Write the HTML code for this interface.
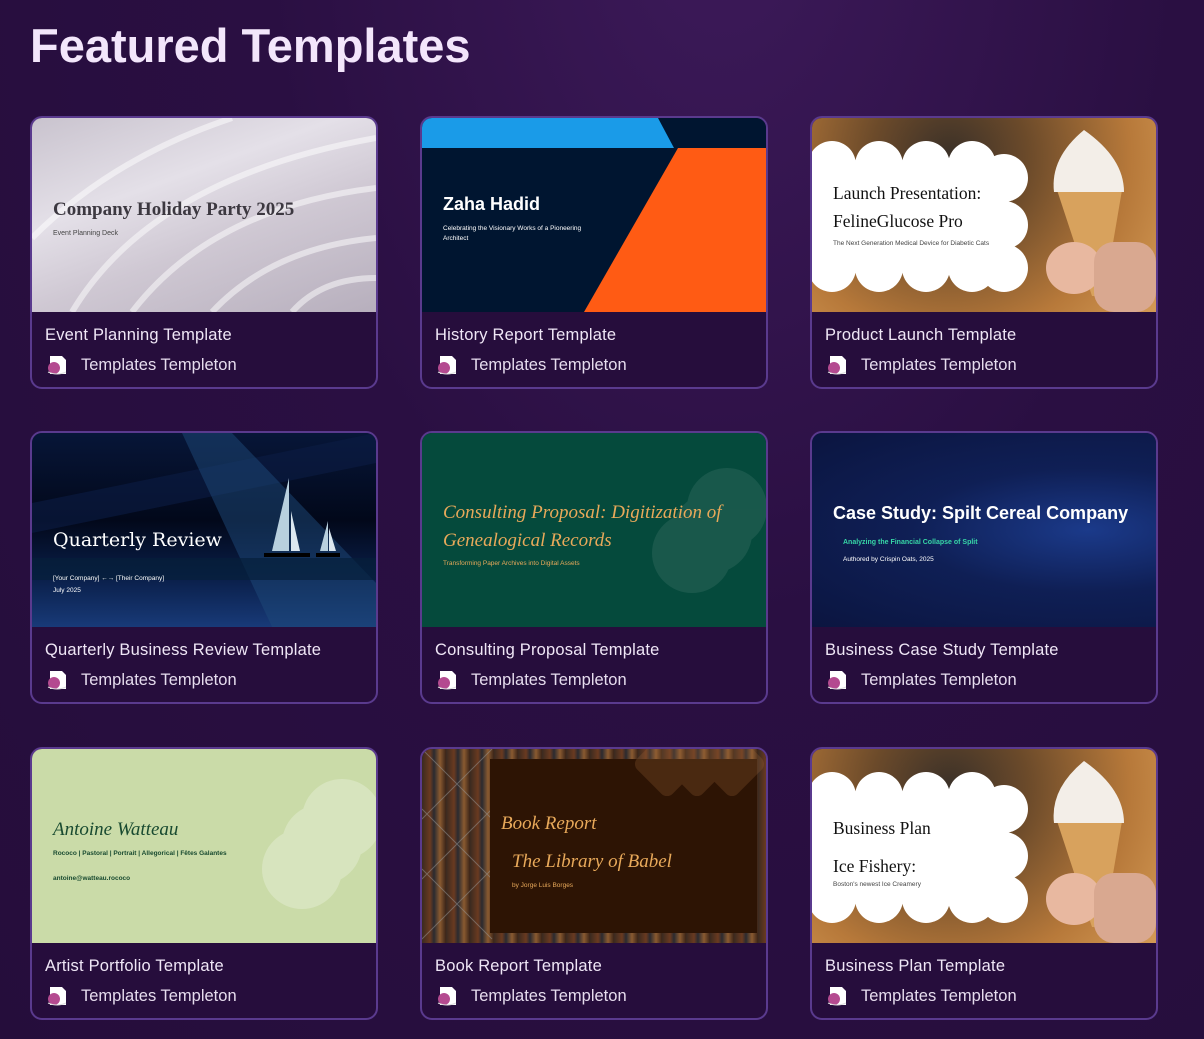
<!DOCTYPE html>
<html><head><meta charset="utf-8">
<style>
*{margin:0;padding:0;box-sizing:border-box}
body{width:1204px;height:1039px;overflow:hidden;background:radial-gradient(ellipse at 60% -10%,#3d1a5a 0%,#2a0f42 45%,#250d3b 100%);font-family:"Liberation Sans",sans-serif;position:relative}
h1{position:absolute;left:30px;top:18px;font-size:47px;font-weight:bold;color:#f3e6fb}
.card{position:absolute;width:348px;height:273px;border:2px solid #5a3a8e;border-radius:12px;background:#260d3c;overflow:hidden}
.th{position:absolute;left:0;top:0;width:344px;height:194px;overflow:hidden}
.t{position:absolute;left:13px;top:208px;font-size:16.5px;color:#efe6f6;letter-spacing:.2px}
.a{position:absolute;left:13px;top:235px;height:24px;display:flex;align-items:center;font-size:16.5px;color:#e6dcee}
.a svg{margin-right:12px}
.abs{position:absolute}
.serif{font-family:"Liberation Serif",serif}
</style></head><body>
<h1>Featured Templates</h1>

<div class="card" style="left:30px;top:116px">
 <div class="th" style="background:linear-gradient(160deg,#c9c3ce 0%,#e4e0e8 35%,#cfc8d3 60%,#b7afbd 100%)">
  <svg class="abs" width="344" height="194" style="left:0;top:0;opacity:.5"><g fill="none" stroke="#fff" stroke-width="6"><path d="M40 194 Q120 60 344 20"/><path d="M100 194 Q180 90 344 70"/><path d="M0 120 Q80 40 200 0"/><path d="M180 194 Q240 130 344 120"/><path d="M260 194 Q290 160 344 160"/></g></svg>
  <div class="abs serif" style="left:21px;top:81px;font-size:19px;color:#3c3840;font-weight:bold">Company Holiday Party 2025</div>
  <div class="abs" style="left:21px;top:112px;font-size:7px;color:#444">Event Planning Deck</div>
 </div>
 <div class="t">Event Planning Template</div>
 <div class="a"><svg width="24" height="24"><path d="M5 3h12l4 4v14H5z" fill="#fff"/><circle cx="9" cy="15" r="6" fill="#b44a90"/><path d="M3 19q9 4 18 0" stroke="#ddd" fill="none"/></svg>Templates Templeton</div>
</div>

<div class="card" style="left:420px;top:116px">
 <div class="th" style="background:#001530">
  <svg class="abs" width="344" height="194" style="left:0;top:0"><polygon points="0,0 236,0 252,30 0,30" fill="#1a9be8"/><polygon points="256,30 344,30 344,194 162,194" fill="#ff5b14"/></svg>
  <div class="abs" style="left:21px;top:76px;font-size:18px;color:#fff;font-weight:bold">Zaha Hadid</div>
  <div class="abs" style="left:21px;top:106px;font-size:6.5px;color:#fff;width:160px;line-height:10px">Celebrating the Visionary Works of a Pioneering Architect</div>
 </div>
 <div class="t">History Report Template</div>
 <div class="a"><svg width="24" height="24"><path d="M5 3h12l4 4v14H5z" fill="#fff"/><circle cx="9" cy="15" r="6" fill="#b44a90"/><path d="M3 19q9 4 18 0" stroke="#ddd" fill="none"/></svg>Templates Templeton</div>
</div>

<div class="card" style="left:810px;top:116px">
 <div class="th" style="background:radial-gradient(circle at 40% 20%,#3a3028 0%,#6b4a2a 30%,#b7793a 70%,#d49a55 100%)">
  <svg class="abs" width="344" height="194" style="left:0;top:0">
   <g fill="#fff"><rect x="0" y="47" width="192" height="103"/>
   <circle cx="20" cy="47" r="24"/><circle cx="67" cy="47" r="24"/><circle cx="114" cy="47" r="24"/><circle cx="160" cy="47" r="24"/><circle cx="192" cy="60" r="24"/><circle cx="192" cy="107" r="24"/><circle cx="192" cy="150" r="24"/>
   <circle cx="20" cy="150" r="24"/><circle cx="67" cy="150" r="24"/><circle cx="114" cy="150" r="24"/><circle cx="160" cy="150" r="24"/></g>
   <path d="M245 72 L310 72 L292 178 L280 178Z" fill="#d8a25d"/>
   <path d="M242 74 Q238 40 272 12 Q312 40 312 74Z" fill="#f3eee8"/>
   <ellipse cx="262" cy="150" rx="28" ry="26" fill="#e8b8a0"/>
   <rect x="282" y="124" width="62" height="70" fill="#d9a890" rx="20"/>
  </svg>
  <div class="abs serif" style="left:21px;top:61px;font-size:17.5px;color:#111;line-height:28px">Launch Presentation:<br>FelineGlucose Pro</div>
  <div class="abs" style="left:21px;top:121px;font-size:6.5px;color:#444;width:170px;line-height:10px">The Next Generation Medical Device for Diabetic Cats</div>
 </div>
 <div class="t">Product Launch Template</div>
 <div class="a"><svg width="24" height="24"><path d="M5 3h12l4 4v14H5z" fill="#fff"/><circle cx="9" cy="15" r="6" fill="#b44a90"/><path d="M3 19q9 4 18 0" stroke="#ddd" fill="none"/></svg>Templates Templeton</div>
</div>

<div class="card" style="left:30px;top:431px">
 <div class="th" style="background:linear-gradient(180deg,#071638 0%,#02081a 45%,#0a1f4a 75%,#183a78 100%)">
  <svg class="abs" width="344" height="194" style="left:0;top:0">
   <polygon points="0,70 344,0 344,30 0,100" fill="#0b1d44" opacity=".6"/>
   <polygon points="150,0 200,0 344,150 344,194 240,194" fill="#1d4a7a" opacity=".5"/>
   <rect x="0" y="125" width="344" height="22" fill="#06203a" opacity=".7"/>
   <polygon points="240,118 257,45 257,118" fill="#b8d0de"/><polygon points="259,118 259,78 268,118" fill="#dce8f0"/>
   <rect x="232" y="120" width="46" height="4" fill="#000"/>
   <polygon points="288,118 296,88 296,118" fill="#b8d0de"/><polygon points="297,118 297,95 304,118" fill="#dce8f0"/>
   <rect x="284" y="120" width="24" height="4" fill="#000"/>
  </svg>
  <div class="abs" style="left:21px;top:96px;font-size:19px;color:#fff;font-family:'DejaVu Serif',serif;font-weight:300">Quarterly Review</div>
  <div class="abs" style="left:21px;top:140px;font-size:6.5px;color:#fff;line-height:12px">[Your Company] ←→ [Their Company]<br>July 2025</div>
 </div>
 <div class="t">Quarterly Business Review Template</div>
 <div class="a"><svg width="24" height="24"><path d="M5 3h12l4 4v14H5z" fill="#fff"/><circle cx="9" cy="15" r="6" fill="#b44a90"/><path d="M3 19q9 4 18 0" stroke="#ddd" fill="none"/></svg>Templates Templeton</div>
</div>

<div class="card" style="left:420px;top:431px">
 <div class="th" style="background:#054a3c">
  <svg class="abs" width="344" height="194" style="left:0;top:0"><g fill="#fff" opacity=".08"><circle cx="305" cy="75" r="40"/><circle cx="290" cy="100" r="40"/><circle cx="270" cy="120" r="40"/></g></svg>
  <div class="abs serif" style="left:21px;top:66px;font-size:19px;color:#e8a95a;font-style:italic;line-height:28px">Consulting Proposal: Digitization of<br>Genealogical Records</div>
  <div class="abs" style="left:21px;top:127px;font-size:6.5px;color:#e8a95a">Transforming Paper Archives into Digital Assets</div>
 </div>
 <div class="t">Consulting Proposal Template</div>
 <div class="a"><svg width="24" height="24"><path d="M5 3h12l4 4v14H5z" fill="#fff"/><circle cx="9" cy="15" r="6" fill="#b44a90"/><path d="M3 19q9 4 18 0" stroke="#ddd" fill="none"/></svg>Templates Templeton</div>
</div>

<div class="card" style="left:810px;top:431px">
 <div class="th" style="background:radial-gradient(ellipse at 80% 50%,#1b3a8a 0%,#0f1f55 45%,#0b1540 100%)">
  <div class="abs" style="left:21px;top:70px;font-size:18px;color:#fff;font-weight:bold">Case Study: Spilt Cereal Company</div>
  <div class="abs" style="left:31px;top:106px;font-size:7px;color:#37d6a6;font-weight:bold">Analyzing the Financial Collapse of Split</div>
  <div class="abs" style="left:31px;top:123px;font-size:6.5px;color:#fff">Authored by Crispin Oats, 2025</div>
 </div>
 <div class="t">Business Case Study Template</div>
 <div class="a"><svg width="24" height="24"><path d="M5 3h12l4 4v14H5z" fill="#fff"/><circle cx="9" cy="15" r="6" fill="#b44a90"/><path d="M3 19q9 4 18 0" stroke="#ddd" fill="none"/></svg>Templates Templeton</div>
</div>

<div class="card" style="left:30px;top:747px">
 <div class="th" style="background:#cadba8">
  <svg class="abs" width="344" height="194" style="left:0;top:0"><g fill="#fff" opacity=".25"><circle cx="310" cy="70" r="40"/><circle cx="290" cy="95" r="40"/><circle cx="270" cy="120" r="40"/></g></svg>
  <div class="abs serif" style="left:21px;top:70px;font-size:19px;color:#184a30;font-style:italic">Antoine Watteau</div>
  <div class="abs" style="left:21px;top:101px;font-size:6.5px;color:#184a30;font-weight:bold">Rococo | Pastoral | Portrait | Allegorical | Fêtes Galantes</div>
  <div class="abs" style="left:21px;top:126px;font-size:6.5px;color:#184a30;font-weight:bold">antoine@watteau.rococo</div>
 </div>
 <div class="t">Artist Portfolio Template</div>
 <div class="a"><svg width="24" height="24"><path d="M5 3h12l4 4v14H5z" fill="#fff"/><circle cx="9" cy="15" r="6" fill="#b44a90"/><path d="M3 19q9 4 18 0" stroke="#ddd" fill="none"/></svg>Templates Templeton</div>
</div>

<div class="card" style="left:420px;top:747px">
 <div class="th" style="background:repeating-linear-gradient(90deg,#3a2a20 0,#6a3a20 8px,#2a2a30 12px,#8a5a30 18px,#3a2418 24px)">
  <svg class="abs" width="344" height="194" style="left:0;top:0"><g stroke="#999" stroke-width="1" opacity=".5" fill="none"><path d="M0 0 L70 70 M0 60 L70 130 M0 120 L70 190 M70 0 L0 70 M70 60 L0 130 M70 120 L0 190"/></g></svg>
  <div class="abs" style="left:68px;top:10px;width:267px;height:174px;background:#2d1404"></div>
  <svg class="abs" width="344" height="194" style="left:0;top:0"><g fill="#a0683a" opacity=".25"><rect x="220" y="-10" width="50" height="50" transform="rotate(45 245 15)" rx="8"/><rect x="250" y="-10" width="50" height="50" transform="rotate(45 275 15)" rx="8"/><rect x="285" y="-10" width="50" height="50" transform="rotate(45 310 15)" rx="8"/></g></svg>
  <div class="abs serif" style="left:79px;top:64px;font-size:19px;color:#e8a95a;font-style:italic">Book Report</div>
  <div class="abs serif" style="left:90px;top:102px;font-size:19px;color:#e8a95a;font-style:italic">The Library of Babel</div>
  <div class="abs" style="left:90px;top:133px;font-size:6.5px;color:#e8a95a">by Jorge Luis Borges</div>
 </div>
 <div class="t">Book Report Template</div>
 <div class="a"><svg width="24" height="24"><path d="M5 3h12l4 4v14H5z" fill="#fff"/><circle cx="9" cy="15" r="6" fill="#b44a90"/><path d="M3 19q9 4 18 0" stroke="#ddd" fill="none"/></svg>Templates Templeton</div>
</div>

<div class="card" style="left:810px;top:747px">
 <div class="th" style="background:radial-gradient(circle at 40% 20%,#3a3028 0%,#6b4a2a 30%,#b7793a 70%,#d49a55 100%)">
  <svg class="abs" width="344" height="194" style="left:0;top:0">
   <g fill="#fff"><rect x="0" y="47" width="192" height="103"/>
   <circle cx="20" cy="47" r="24"/><circle cx="67" cy="47" r="24"/><circle cx="114" cy="47" r="24"/><circle cx="160" cy="47" r="24"/><circle cx="192" cy="60" r="24"/><circle cx="192" cy="107" r="24"/><circle cx="192" cy="150" r="24"/>
   <circle cx="20" cy="150" r="24"/><circle cx="67" cy="150" r="24"/><circle cx="114" cy="150" r="24"/><circle cx="160" cy="150" r="24"/></g>
   <path d="M245 72 L310 72 L292 178 L280 178Z" fill="#d8a25d"/>
   <path d="M242 74 Q238 40 272 12 Q312 40 312 74Z" fill="#f3eee8"/>
   <ellipse cx="262" cy="150" rx="28" ry="26" fill="#e8b8a0"/>
   <rect x="282" y="124" width="62" height="70" fill="#d9a890" rx="20"/>
  </svg>
  <div class="abs serif" style="left:21px;top:60px;font-size:17.5px;color:#111;line-height:38px">Business Plan<br>Ice Fishery:</div>
  <div class="abs" style="left:21px;top:132px;font-size:6.5px;color:#444">Boston's newest Ice Creamery</div>
 </div>
 <div class="t">Business Plan Template</div>
 <div class="a"><svg width="24" height="24"><path d="M5 3h12l4 4v14H5z" fill="#fff"/><circle cx="9" cy="15" r="6" fill="#b44a90"/><path d="M3 19q9 4 18 0" stroke="#ddd" fill="none"/></svg>Templates Templeton</div>
</div>
</body></html>
